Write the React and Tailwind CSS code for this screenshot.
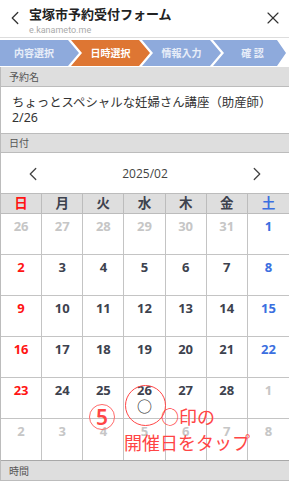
import React from "react";
import { ChevronLeft, ChevronRight, X } from "lucide-react";

const JP = "font-['Noto_Sans','Noto_Sans_CJK_JP',sans-serif]";
const NUM = "font-['Open_Sans','Noto_Sans_CJK_JP',sans-serif]";

const weeks = [
  [["26", "g"], ["27", "g"], ["28", "g"], ["29", "g"], ["30", "g"], ["31", "g"], ["1", "sat"]],
  [["2", "sun"], ["3", "d"], ["4", "d"], ["5", "d"], ["6", "d"], ["7", "d"], ["8", "sat"]],
  [["9", "sun"], ["10", "d"], ["11", "d"], ["12", "d"], ["13", "d"], ["14", "d"], ["15", "sat"]],
  [["16", "sun"], ["17", "d"], ["18", "d"], ["19", "d"], ["20", "d"], ["21", "d"], ["22", "sat"]],
  [["23", "sun"], ["24", "d"], ["25", "d"], ["26", "d", true], ["27", "d"], ["28", "d"], ["1", "g"]],
  [["2", "g"], ["3", "g"], ["4", "g"], ["5", "g"], ["6", "g"], ["7", "g"], ["8", "g"]],
];

const colorOf = {
  g: "text-[#c6c6c6]",
  d: "text-[#3d424e]",
  sun: "text-[#ff1414]",
  sat: "text-[#3b6fe0]",
};

const days = [
  ["日", "text-[#ff1414]"],
  ["月", "text-[#3d424e]"],
  ["火", "text-[#3d424e]"],
  ["水", "text-[#3d424e]"],
  ["木", "text-[#3d424e]"],
  ["金", "text-[#3d424e]"],
  ["土", "text-[#3b6fe0]"],
];

function Band({ children, top }) {
  return (
    <div
      className={`box-border h-[20px] bg-[#dedede] border-b border-[#bcbcbc] ${
        top ? "border-t" : ""
      } pl-[8px] flex items-center text-[10px] text-[#555] leading-none`}
    >
      {children}
    </div>
  );
}

export default function App() {
  return (
    <div className={`relative w-[289px] h-[500px] overflow-hidden bg-white ${JP}`}>
      {/* header */}
      <header className="box-border h-[38px] border-b border-[#dddddd] flex items-start">
        <ChevronLeft size={22} strokeWidth={1.4} className="ml-[4px] mt-[7px] text-[#333]" />
        <div className="ml-[3px] pt-[6px] flex flex-col">
          <div className="text-[13px] leading-[16px] font-bold text-[#222]">宝塚市予約受付フォーム</div>
          <div className="mt-[3px] text-[9px] leading-[11px] text-[#aaaaaa] font-['Roboto',sans-serif]">
            e.kanameto.me
          </div>
        </div>
        <X size={20} strokeWidth={1.4} className="ml-auto mr-[6px] mt-[8px] text-[#333]" />
      </header>

      {/* steps */}
      <div className="box-border h-[29px] pt-[2px] pb-[1px] flex">
        <div className="w-[79px] shrink-0 h-[26px] bg-[#8eaadc] [clip-path:polygon(0_0,68px_0,79px_50%,68px_100%,0_100%)] flex items-center">
          <span className="w-[68px] text-center text-[10px] font-bold text-white/80">内容選択</span>
        </div>
        <div className="w-[79px] shrink-0 -ml-[8px] h-[26px] bg-[#de7633] [clip-path:polygon(0_0,68px_0,79px_50%,68px_100%,0_100%,11px_50%)] flex items-center">
          <span className="pl-[11px] w-[68px] text-center text-[10px] font-bold text-white">日時選択</span>
        </div>
        <div className="w-[79px] shrink-0 -ml-[8px] h-[26px] bg-[#8eaadc] [clip-path:polygon(0_0,68px_0,79px_50%,68px_100%,0_100%,11px_50%)] flex items-center">
          <span className="pl-[11px] w-[68px] text-center text-[10px] font-bold text-white/80">情報入力</span>
        </div>
        <div className="w-[73px] shrink-0 -ml-[8px] h-[26px] bg-[#8eaadc] [clip-path:polygon(0_0,64px_0,73px_50%,64px_100%,0_100%,11px_50%)] flex items-center">
          <span className="pl-[11px] w-[68px] text-center text-[10px] font-bold text-white/80">確 認</span>
        </div>
      </div>

      {/* content */}
      <div className="border-l border-[#bcbcbc]">
        <Band>予約名</Band>
        <div className="box-border h-[46px] py-[8px] pl-[11px] text-[12.4px] leading-[15px] text-[#333]">
          <div>ちょっとスペシャルな妊婦さん講座（助産師）</div>
          <div>2/26</div>
        </div>
        <Band top>日付</Band>

        {/* calendar nav */}
        <div className="h-[40px] flex items-center justify-between px-[21px] pt-[2px] text-[#444]">
          <ChevronLeft size={22} strokeWidth={1.4} />
          <span className={`text-[12px] ${NUM}`}>2025/02</span>
          <ChevronRight size={22} strokeWidth={1.4} />
        </div>

        {/* weekday header */}
        <div className="grid grid-cols-7 border-t border-[#bcbcbc] bg-[#dedede]">
          {days.map(([d, c], i) => (
            <div
              key={i}
              className={`box-border h-[20px] border-b border-[#bcbcbc] ${
                i < 6 ? "border-r" : ""
              } flex items-center justify-center text-[13.5px] font-bold leading-none ${c}`}
            >
              {d}
            </div>
          ))}
        </div>

        {/* day grid */}
        <div className="grid grid-cols-7 border-b border-[#a8a8a8]">
          {weeks.flat().map(([n, t, mark], i) => (
            <div
              key={i}
              className={`box-border h-[41px] ${i < 35 ? "border-b" : ""} border-[#c4c4c4] ${
                i % 7 < 6 ? "border-r" : ""
              } flex flex-col items-center pt-[4px]`}
            >
              <span className={`text-[13px] leading-[16px] font-bold ${NUM} ${colorOf[t]}`}>{n}</span>
              {mark && (
                <span className="text-[15px] leading-[15px] mt-[1px] text-[#333] font-medium">○</span>
              )}
            </div>
          ))}
        </div>

        <Band>時間</Band>
      </div>

      {/* annotation overlay */}
      <div className="absolute left-[125px] top-[385px] w-[41px] h-[41px] rounded-full border-[1.5px] border-[#ff4545]" />
      <div className="absolute left-[89px] top-[404px] w-[26px] h-[26px] rounded-full border-[1.2px] border-[#ff6a6a] flex items-center justify-center text-[21px] leading-none font-semibold text-[#ff4545] font-['Noto_Sans',sans-serif]">
        5
      </div>
      <div className="absolute left-[124px] top-[404px] text-[18px] leading-[26px] text-[#ff4545] whitespace-nowrap">
        <div className="pl-[37px]">○印の</div>
        <div>開催日をタップ</div>
      </div>
    </div>
  );
}
